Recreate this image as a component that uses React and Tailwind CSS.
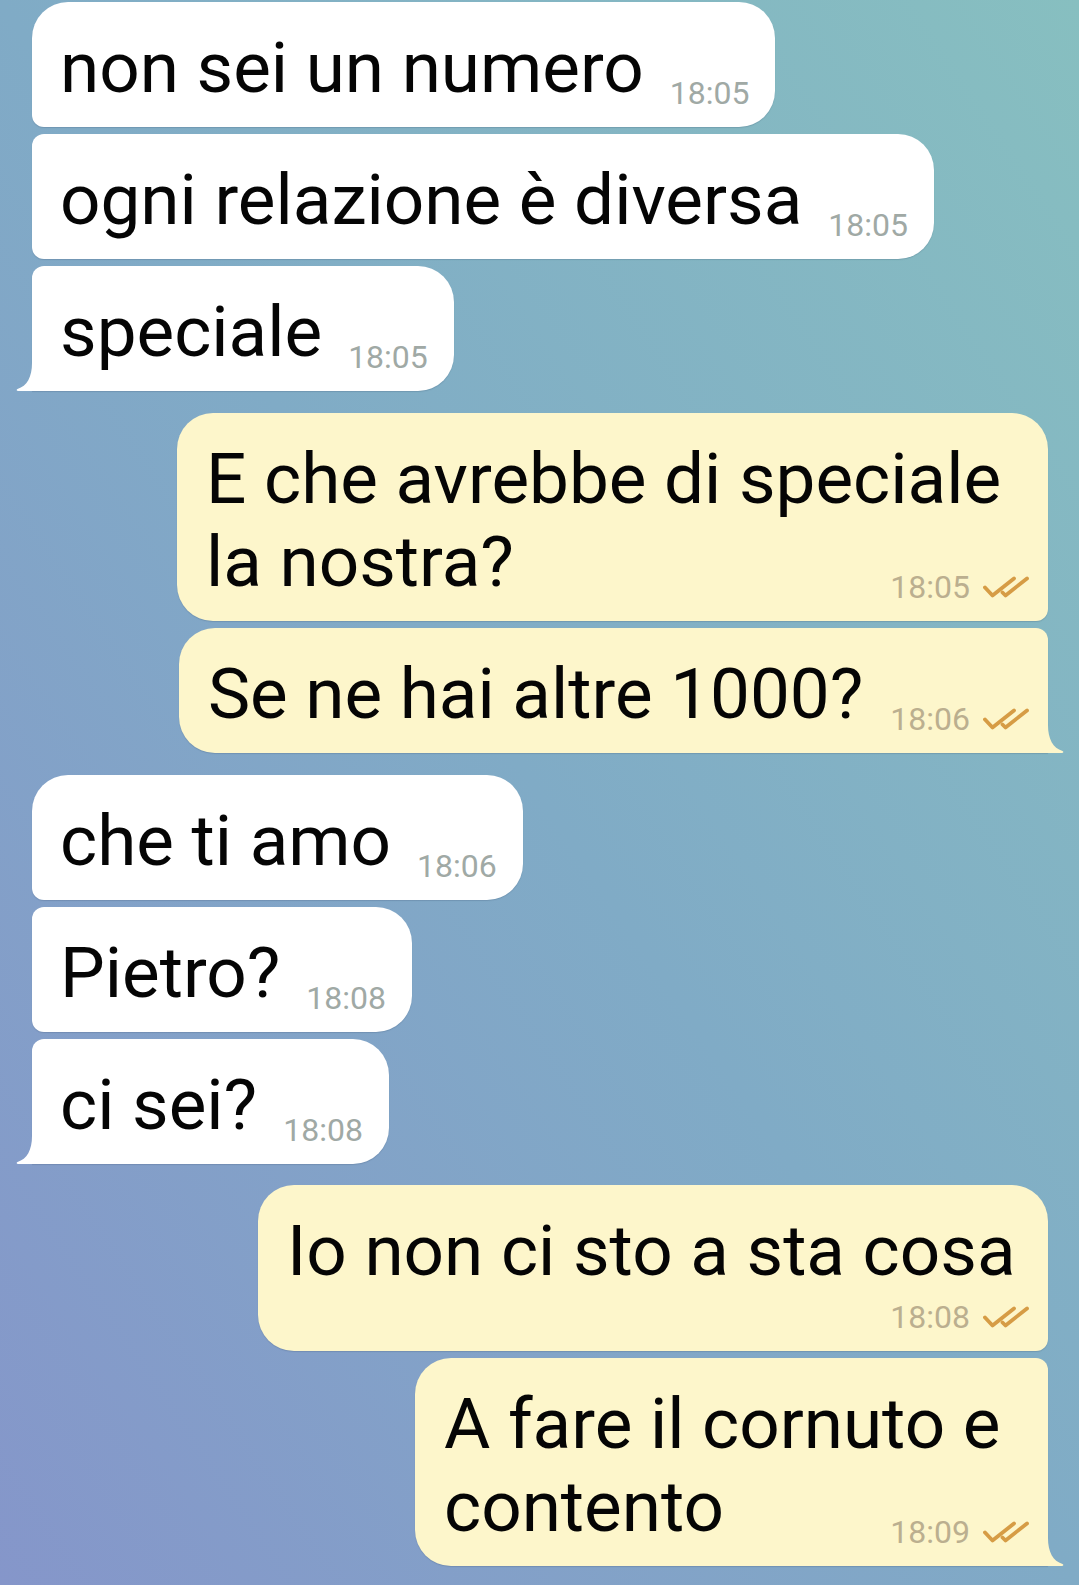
const messages = [
  { id: 1, out: false, text: "non sei un numero", time: "18:05", kind: "row", shape: "rounded-[36px] rounded-bl-[12px]", gap: "mt-[2px]" },
  { id: 2, out: false, text: "ogni relazione è diversa", time: "18:05", kind: "row", shape: "rounded-[36px] rounded-tl-[12px] rounded-bl-[12px]", gap: "mt-[7px]" },
  { id: 3, out: false, text: "speciale", time: "18:05", kind: "row", shape: "rounded-[36px] rounded-tl-[12px] rounded-bl-none", gap: "mt-[7px]", tail: true },
  { id: 4, out: true, text: "E che avrebbe di speciale la nostra?", time: "18:05", kind: "wrap", width: "w-[871px]", shape: "rounded-[36px] rounded-br-[12px]", gap: "mt-[22px]" },
  { id: 5, out: true, text: "Se ne hai altre 1000?", time: "18:06", kind: "row", shape: "rounded-[36px] rounded-tr-[12px] rounded-br-none", gap: "mt-[7px]", tail: true },
  { id: 6, out: false, text: "che ti amo", time: "18:06", kind: "row", shape: "rounded-[36px] rounded-bl-[12px]", gap: "mt-[22px]" },
  { id: 7, out: false, text: "Pietro?", time: "18:08", kind: "row", shape: "rounded-[36px] rounded-tl-[12px] rounded-bl-[12px]", gap: "mt-[7px]" },
  { id: 8, out: false, text: "ci sei?", time: "18:08", kind: "row", shape: "rounded-[36px] rounded-tl-[12px] rounded-bl-none", gap: "mt-[7px]", tail: true },
  { id: 9, out: true, text: "Io non ci sto a sta cosa", time: "18:08", kind: "col", width: "w-[790px]", shape: "rounded-[36px] rounded-br-[12px]", gap: "mt-[21px]" },
  { id: 10, out: true, text: "A fare il cornuto e contento", time: "18:09", kind: "wrap", width: "w-[633px]", shape: "rounded-[36px] rounded-tr-[12px] rounded-br-none", gap: "mt-[7px]", tail: true },
];

const Checks = () => (
  <svg width="46" height="24" viewBox="0 0 46 24" fill="none" stroke="#d69c45" strokeWidth="3.8" strokeLinecap="round" strokeLinejoin="round">
    <path d="M2 12.5 L9.5 20.5 L31 3.5" />
    <path d="M19.5 17.5 L22.5 20.5 L44 3.5" />
  </svg>
);

const Tail = ({ out }) => (
  <svg
    className={out ? "absolute bottom-0 right-[-16px] -scale-x-100" : "absolute bottom-0 left-[-16px]"}
    width="20"
    height="28"
    viewBox="0 0 20 28"
  >
    <path d="M16 0 C16 14 11 23 1.5 26 C0.2 26.4 0.4 28 2.2 28 L20 28 L20 0 Z" fill={out ? "#fdf6cb" : "#ffffff"} />
  </svg>
);

const Time = ({ m }) => (
  <div className={m.out ? "flex items-center gap-[13px] text-[32px] leading-[32px] text-[#bbaf8f]" : "flex items-center text-[32px] leading-[32px] text-[#a0a9a5]"}>
    <span>{m.time}</span>
    {m.out && <Checks />}
  </div>
);

const Bubble = ({ m }) => {
  const bg = m.out ? "bg-[#fdf6cb]" : "bg-white";
  const pad = m.out ? "pl-[29px] pr-[19px]" : "pl-[28px] pr-[26px]";
  const base = `relative pt-[24px] pb-[15px] shadow-[0_1px_1px_rgba(40,60,90,0.18)] ${bg} ${pad} ${m.shape}`;

  let body;
  if (m.kind === "row") {
    body = (
      <div className={`${base} flex items-end`}>
        <span className="mb-[3px] whitespace-nowrap text-[71px] leading-[83px]">{m.text}</span>
        <div className={m.out ? "ml-[27px] mb-[3px]" : "ml-[26px] mb-[3px]"}>
          <Time m={m} />
        </div>
        {m.tail && <Tail out={m.out} />}
      </div>
    );
  } else if (m.kind === "col") {
    body = (
      <div className={`${base} ${m.width} flex flex-col`}>
        <span className="whitespace-nowrap text-[71px] leading-[83px]">{m.text}</span>
        <div className="mt-[9px] mb-[3px] self-end">
          <Time m={m} />
        </div>
        {m.tail && <Tail out={m.out} />}
      </div>
    );
  } else {
    body = (
      <div className={`${base} ${m.width} flex flex-col`}>
        <p className="text-[71px] leading-[83px]">{m.text}</p>
        <div className="mt-[-32px] mb-[3px] self-end">
          <Time m={m} />
        </div>
        {m.tail && <Tail out={m.out} />}
      </div>
    );
  }

  return <div className={`flex ${m.out ? "justify-end" : "justify-start"} ${m.gap}`}>{body}</div>;
};

export default function App() {
  return (
    <div className="min-h-[1585px] w-full overflow-hidden bg-linear-to-bl from-[#87bfc0] via-[#80abc6] to-[#8596ca] pl-[32px] pr-[31px] font-['Roboto',sans-serif] text-[#050505]">
      {messages.map((m) => (
        <Bubble key={m.id} m={m} />
      ))}
    </div>
  );
}
